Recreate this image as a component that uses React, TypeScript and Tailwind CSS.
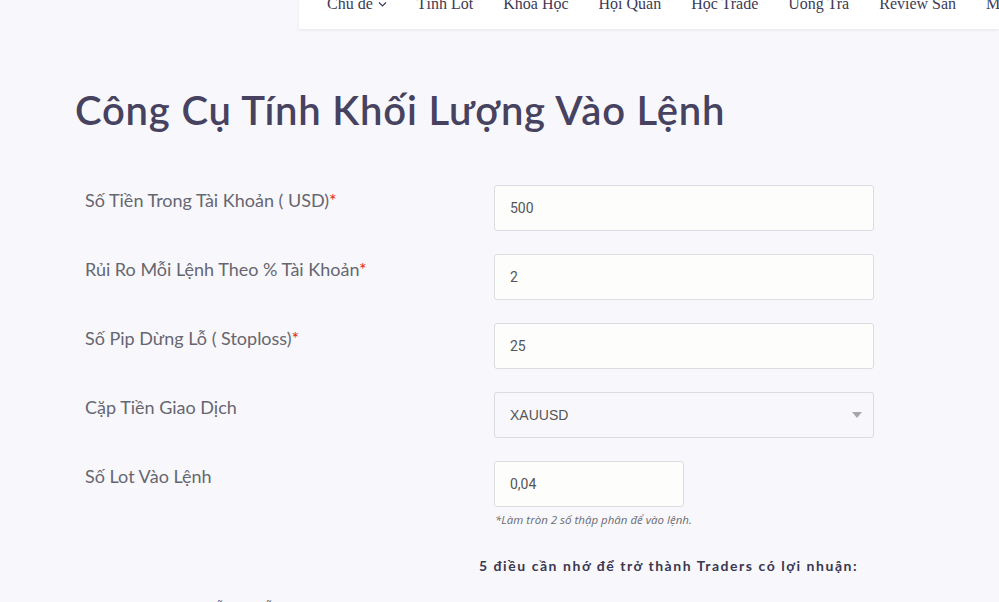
const navItems = ['Chủ đề', 'Tính Lot', 'Khóa Học', 'Hội Quán', 'Học Trade', 'Uống Trà', 'Review Sàn', 'Mua Sách']

function Field({ label, required, children }: { label: string; required?: boolean; children: React.ReactNode }) {
  return (
    <div className="grid grid-cols-[409px_380px] items-start">
      <div className="pt-[2px] font-['Lato',sans-serif] text-[18px] leading-[27px] text-[#666670]">
        {label}
        {required && <span className="text-[#e2231a]">*</span>}
      </div>
      {children}
    </div>
  )
}

function TextInput({ value, narrow }: { value: string; narrow?: boolean }) {
  return (
    <div
      className={`flex h-[46px] items-center rounded-[3px] border border-[#dcdce0] bg-[#fdfefc] pl-[15px] font-['Roboto',sans-serif] text-[14px] text-[#555] ${narrow ? 'w-[190px]' : 'w-[380px]'}`}
    >
      {value}
    </div>
  )
}

export default function App() {
  return (
    <div className="h-[602px] w-[999px] overflow-hidden bg-[#f8f8fc]">
      {/* Top nav (scrolled, partly hidden) */}
      <header className="ml-[299px] h-[29px] overflow-hidden bg-white shadow-[0_1px_3px_rgba(0,0,0,0.08)]">
        <nav className="-mt-[6px] flex items-center gap-[30px] whitespace-nowrap pl-[28px] font-['Liberation_Serif',serif] text-[16px] leading-[20px] text-[#3d3a55]">
          {navItems.map((item, i) => (
            <span key={item} className="flex items-center gap-[5px]">
              {item}
              {i === 0 && (
                <svg width="9" height="6" viewBox="0 0 9 6" fill="none" stroke="#3d3a55" strokeWidth="1.2">
                  <path d="M1 1.5l3.5 3.5 3.5-3.5" />
                </svg>
              )}
            </span>
          ))}
        </nav>
      </header>

      <main className="pl-[75px]">
        <h1 className="mt-[56px] font-['Lato',sans-serif] text-[40px] font-semibold leading-[50px] tracking-[0.8px] text-[#46425f]">
          Công Cụ Tính Khối Lượng Vào Lệnh
        </h1>

        <div className="mt-[50px] flex flex-col gap-[23px] pl-[10px]">
          <Field label="Số Tiền Trong Tài Khoản ( USD)" required>
            <TextInput value="500" />
          </Field>
          <Field label="Rủi Ro Mỗi Lệnh Theo % Tài Khoản" required>
            <TextInput value="2" />
          </Field>
          <Field label="Số Pip Dừng Lỗ ( Stoploss)" required>
            <TextInput value="25" />
          </Field>
          <Field label="Cặp Tiền Giao Dịch">
            <div className="flex h-[46px] w-[380px] items-center justify-between rounded-[3px] border border-[#dcdce0] bg-[#f8f8fc] pl-[15px] pr-[11px] font-['Liberation_Sans',sans-serif] text-[14px] text-[#555]">
              XAUUSD
              <svg width="10" height="6" viewBox="0 0 10 6">
                <path d="M0 0h10L5 6z" fill="#a6a6ab" />
              </svg>
            </div>
          </Field>
          <Field label="Số Lot Vào Lệnh">
            <div>
              <TextInput value="0,04" narrow />
              <p className="mt-[5px] pl-[1px] font-['Open_Sans',sans-serif] text-[11.5px] italic leading-[16px] text-[#6a6a72]">
                *Làm tròn 2 số thập phân để vào lệnh.
              </p>
            </div>
          </Field>
        </div>

        <h2 className="ml-[404px] mt-[28px] font-['Lato',sans-serif] text-[14px] font-bold leading-[20px] tracking-[1.55px] text-[#3a3750]">
          5 điều cần nhớ để trở thành Traders có lợi nhuận:
        </h2>

        <p className="ml-[45px] mt-[21px] font-['Lato',sans-serif] text-[14px] leading-[20px] text-[#666670]">
          Luôn đặt dừng lỗ cho mỗi lệnh giao dịch của bạn, không dời.
        </p>
      </main>
    </div>
  )
}
